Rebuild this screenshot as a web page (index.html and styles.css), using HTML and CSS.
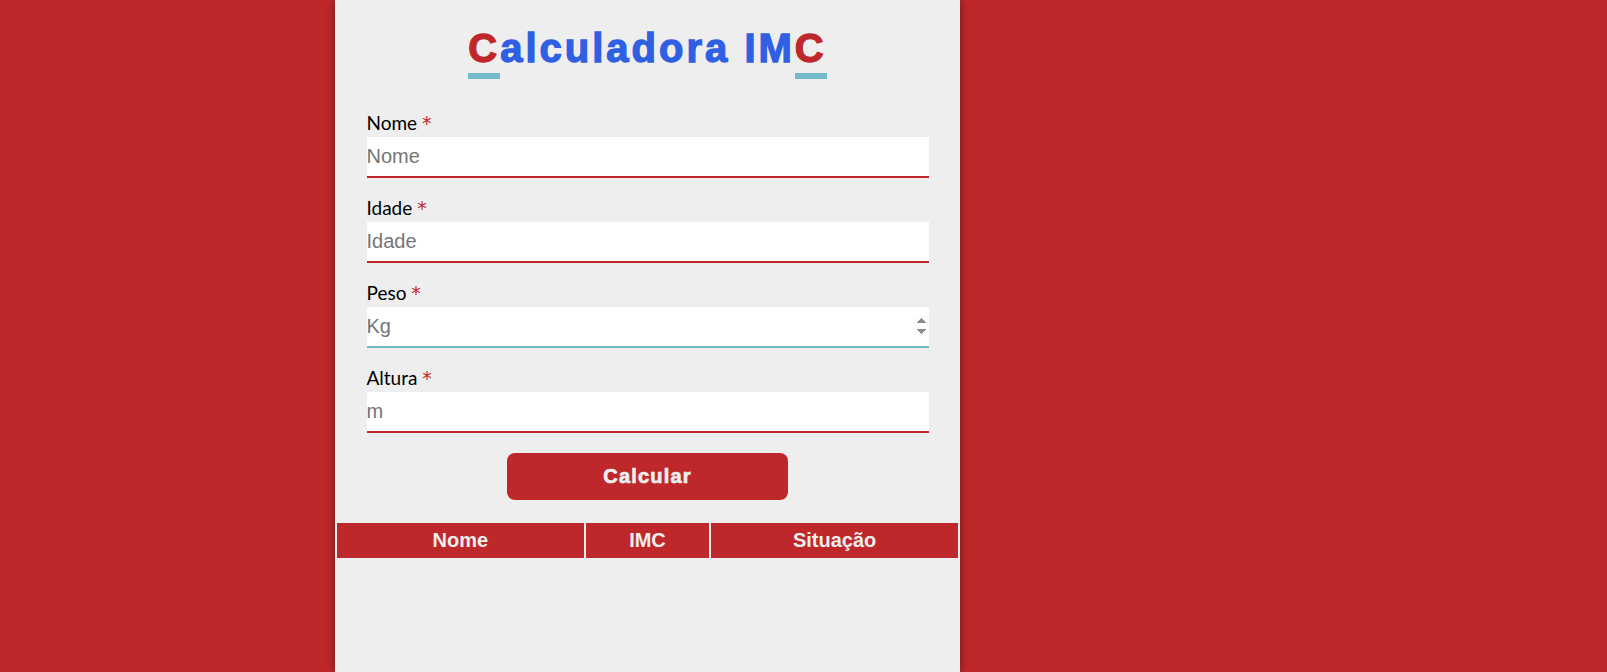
FILE: index.html
```html
<!DOCTYPE html>
<html lang="pt-BR">
<head>
<meta charset="utf-8">
<title>Calculadora IMC</title>
<link rel="stylesheet" href="styles.css">
</head>
<body>
<main class="panel">
  <h1 class="title"><span class="accent">C</span>alculadora IM<span class="accent">C</span></h1>
  <form class="form" onsubmit="return false">
    <div class="field">
      <label class="label" for="nome">Nome <span class="req">*</span></label>
      <input class="input" id="nome" type="text" placeholder="Nome">
    </div>
    <div class="field">
      <label class="label" for="idade">Idade <span class="req">*</span></label>
      <input class="input" id="idade" type="text" placeholder="Idade">
    </div>
    <div class="field">
      <label class="label" for="peso">Peso <span class="req">*</span></label>
      <input class="input" id="peso" type="number" placeholder="Kg" autofocus>
    </div>
    <div class="field">
      <label class="label" for="altura">Altura <span class="req">*</span></label>
      <input class="input" id="altura" type="text" placeholder="m">
    </div>
    <div class="actions">
      <button class="btn" type="button">Calcular</button>
    </div>
  </form>
  <table class="results">
    <thead>
      <tr>
        <th class="col-wide">Nome</th>
        <th class="col-narrow">IMC</th>
        <th class="col-wide">Situação</th>
      </tr>
    </thead>
    <tbody></tbody>
  </table>
</main>
</body>
</html>
```
FILE: styles.css
```css
html, body {
  margin: 0;
  padding: 0;
  height: 100%;
}
body {
  background: #bf282b;
  font-family: "Liberation Sans", Arial, sans-serif;
}
.panel {
  box-sizing: border-box;
  margin-left: 335px;
  width: 625px;
  min-height: 100vh;
  background: #eeeeee;
  box-shadow: 0 0 10px rgba(0, 0, 0, 0.45);
  padding-top: 25px;
  display: flex;
  flex-direction: column;
}
.title {
  margin: 0 0 42px;
  text-align: center;
  font-family: "Liberation Sans", Arial, sans-serif;
  font-weight: bold;
  font-size: 40px;
  line-height: 46px;
  letter-spacing: 3px;
  color: #2f5fe2;
  -webkit-text-stroke: 1.3px #2f5fe2;
}
.accent {
  color: #bf282b;
  -webkit-text-stroke: 1.3px #bf282b;
  padding-bottom: 3px;
  border-bottom: 6px solid #72bbc8;
}
.form {
  width: 562px;
  margin: 0 auto;
  display: flex;
  flex-direction: column;
  gap: 20px;
}
.field {
  display: flex;
  flex-direction: column;
}
.label {
  display: block;
  height: 20px;
  overflow: visible;
  font-family: Lato, "Noto Sans", sans-serif;
  font-size: 19px;
  line-height: 20px;
  color: #000;
  margin-bottom: 4px;
}
.req {
  color: #c0272b;
  font-family: "DejaVu Sans", sans-serif;
  font-size: 19px;
  line-height: 20px;
  font-weight: normal;
}
.input {
  box-sizing: border-box;
  height: 41px;
  width: 100%;
  border: none;
  border-bottom: 2px solid #bf282b;
  background: #fff;
  padding: 0;
  margin: 0;
  font-family: "Liberation Sans", Arial, sans-serif;
  font-size: 20px;
  color: #333;
  outline: none;
  border-radius: 0;
}
.input::placeholder {
  color: #757575;
}
.input:focus {
  border-bottom-color: #72bbc8;
  outline: none;
}
.actions {
  display: flex;
  justify-content: center;
}
.btn {
  width: 281px;
  height: 47px;
  border: none;
  border-radius: 8px;
  background: #bf282b;
  color: #eeeeee;
  font-family: "Liberation Sans", Arial, sans-serif;
  font-weight: bold;
  font-size: 20px;
  letter-spacing: 1.2px;
  -webkit-text-stroke: 0.7px #eeeeee;
  cursor: pointer;
}
.results {
  width: 100%;
  margin-top: 21px;
  border-collapse: separate;
  border-spacing: 2px;
}
.results th {
  background: #bf282b;
  color: #eeeeee;
  font-family: "Liberation Sans", Arial, sans-serif;
  font-weight: bold;
  font-size: 20px;
  height: 35px;
  padding: 0;
  text-align: center;
}
.col-wide { width: 40%; }
.col-narrow { width: 20%; }
```
